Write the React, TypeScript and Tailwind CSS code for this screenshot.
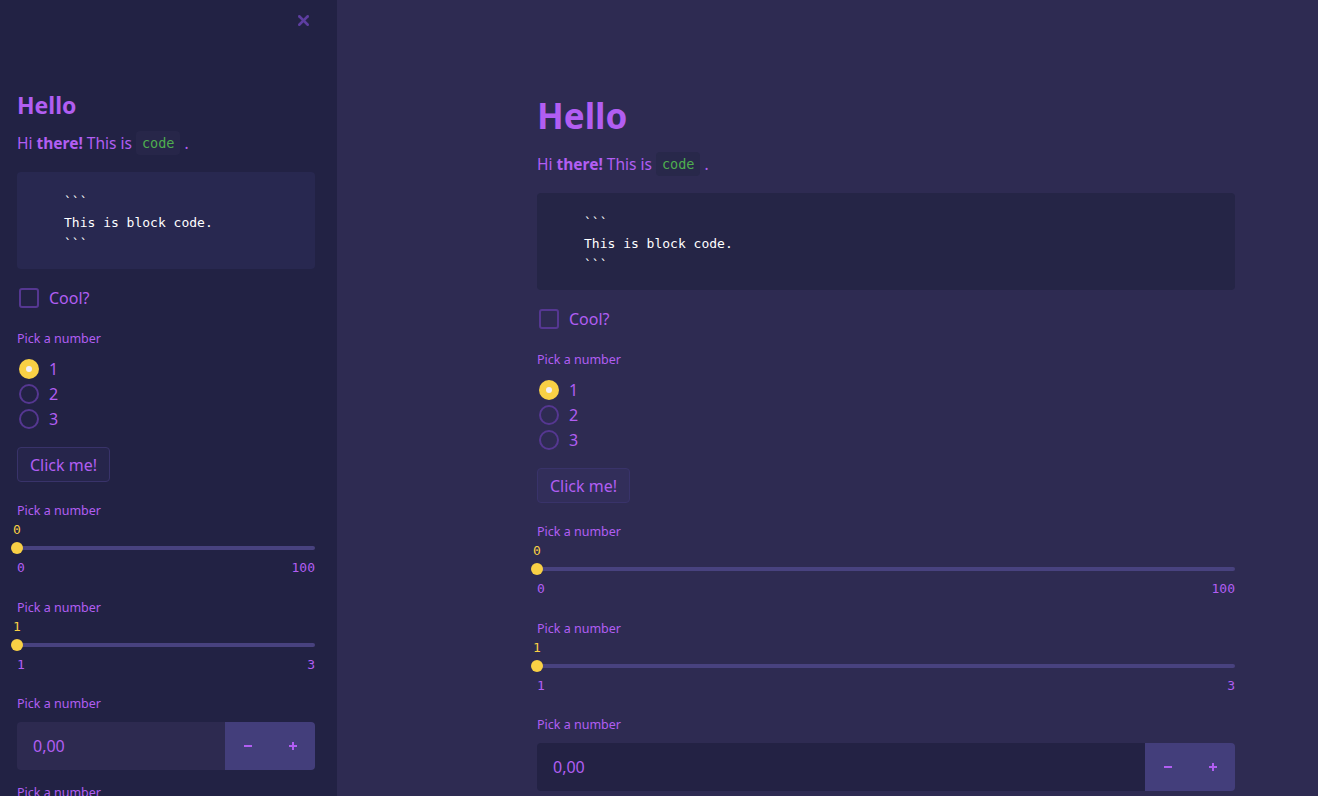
import { X } from 'lucide-react';

const sans = { fontFamily: '"Noto Sans", "Open Sans", sans-serif' };

type Variant = 'side' | 'main';

const Radio = ({ label, checked }: { label: string; checked?: boolean }) => (
  <div className="flex items-center h-[25px]">
    {checked ? (
      <div className="ml-[2px] w-5 h-5 rounded-full bg-[#f9d045] flex items-center justify-center">
        <div className="w-[6px] h-[6px] rounded-full bg-[#f1eef7]" />
      </div>
    ) : (
      <div className="ml-[2px] w-5 h-5 rounded-full border-2 border-[#553791]" />
    )}
    <span className="ml-[10px] text-[16px] text-[#b15ef2]">{label}</span>
  </div>
);

const Slider = ({ value, min, max }: { value: string; min: string; max: string }) => (
  <div>
    <div className="h-4 flex items-center text-[12.5px] text-[#b15ef2] mt-2">Pick a number</div>
    <div className="relative h-4 mt-[3px] font-['DejaVu_Sans_Mono',monospace] text-[13px] text-[#f9d045]">
      <span className="absolute -left-[4px] top-0 leading-4">{value}</span>
    </div>
    <div className="relative h-3 mt-[4px] flex items-center">
      <div className="w-full h-1 rounded-full bg-[#48427f]" />
      <div className="absolute -left-[6px] top-0 w-3 h-3 rounded-full bg-[#f9d045]" />
    </div>
    <div className="h-4 mt-[6px] flex justify-between font-['DejaVu_Sans_Mono',monospace] text-[13px] text-[#b15ef2] leading-4">
      <span>{min}</span>
      <span>{max}</span>
    </div>
  </div>
);

const Content = ({ variant }: { variant: Variant }) => {
  const side = variant === 'side';
  return (
    <div className="flex flex-col text-[#b15ef2]" style={sans}>
      {side ? (
        <h2 className="text-[23px] font-bold leading-[30px] h-[30px]">Hello</h2>
      ) : (
        <h1 className="text-[35px] font-bold leading-[46px] h-[46px]">Hello</h1>
      )}
      <p className={`${side ? 'mt-[11px]' : 'mt-[13px]'} h-6 text-[15.5px] leading-6 flex items-center`}>
        Hi&nbsp;<b className="font-bold">there!</b>&nbsp;This is&nbsp;
        <code className={`${side ? 'bg-[#272649]' : 'bg-[#28284a]'} rounded-[4px] px-[6px] h-6 leading-6 text-[#4fae4f] font-['DejaVu_Sans_Mono',monospace] text-[13.5px]`}>
          code
        </code>
        &nbsp;.
      </p>
      <pre
        className={`mt-[17px] h-[97px] rounded-[4px] ${side ? 'bg-[#282850]' : 'bg-[#252546]'} pl-[47px] pt-[19px] text-white font-['DejaVu_Sans_Mono',monospace] text-[13px] leading-[21px]`}
      >
        {'```\nThis is block code.\n```'}
      </pre>
      <div className="mt-[18px] h-[22px] flex items-center">
        <div className="ml-[2px] w-5 h-5 rounded-[3px] border-2 border-[#553791]" />
        <span className="ml-[10px] text-[16px]">Cool?</span>
      </div>
      <div className="mt-[22px] h-4 flex items-center text-[12.5px]">Pick a number</div>
      <div className="mt-[9px] flex flex-col">
        <Radio label="1" checked />
        <Radio label="2" />
        <Radio label="3" />
      </div>
      <div className="mt-4">
        <button
          className={`h-[35px] px-3 rounded-[4px] border border-[#39336a] ${side ? 'bg-[#26254b]' : 'bg-[#322e5a]'} text-[16px] text-[#b15ef2]`}
        >
          Click me!
        </button>
      </div>
      <div className="mt-[13px]">
        <Slider value="0" min="0" max="100" />
      </div>
      <div className="mt-[16px]">
        <Slider value="1" min="1" max="3" />
      </div>
      <div className="mt-[23px] h-4 flex items-center text-[12.5px]">Pick a number</div>
      <div className="mt-[10px] h-12 flex rounded-[4px] overflow-hidden">
        <div className={`flex-1 flex items-center pl-4 text-[16px] ${side ? 'bg-[#2d2a50]' : 'bg-[#232244]'}`}>0,00</div>
        <div className="w-[90px] flex bg-[#433e7b]">
          <div className="flex-1 flex items-center justify-center">
            <div className="w-2 h-[2px] bg-[#b15ef2]" />
          </div>
          <div className="flex-1 flex items-center justify-center relative">
            <div className="w-2 h-[2px] bg-[#b15ef2]" />
            <div className="absolute w-[2px] h-2 bg-[#b15ef2]" />
          </div>
        </div>
      </div>
      {side && <div className="mt-[14px] h-4 text-[12.5px]">Pick a number</div>}
    </div>
  );
};

export default function App() {
  return (
    <div className="flex w-[1318px] h-[796px] overflow-hidden bg-[#2e2b52]">
      <aside className="relative w-[337px] shrink-0 h-full bg-[#222244] pl-[17px] pr-[22px] pt-[90px] overflow-hidden">
        <button className="absolute left-[295px] top-[12px] text-[#5e3ea1]">
          <X size={17} strokeWidth={3.5} />
        </button>
        <Content variant="side" />
      </aside>
      <main className="flex-1 h-full pl-[200px] pt-[93px] overflow-hidden">
        <div className="w-[698px]">
          <Content variant="main" />
        </div>
      </main>
    </div>
  );
}
